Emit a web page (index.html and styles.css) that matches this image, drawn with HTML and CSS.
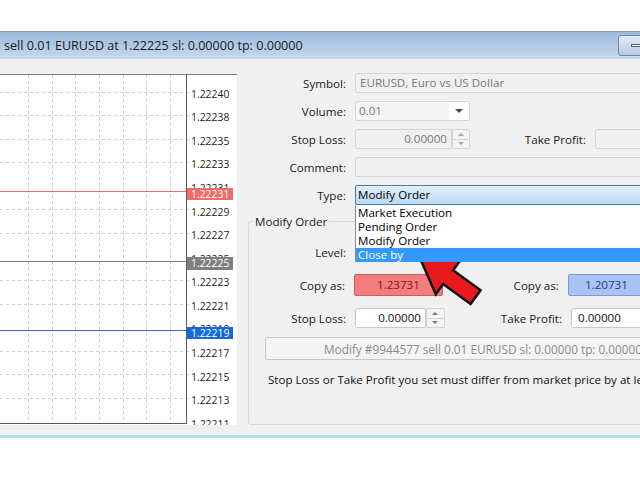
FILE: index.html
```html
<!DOCTYPE html>
<html lang="en">
<head>
    <meta charset="UTF-8">
    <meta name="viewport" content="width=device-width, initial-scale=1.0">
    <title>Modify Order</title>
    <link rel="stylesheet" href="styles.css">
</head>
<body>

    <div class="window">
        <div class="titlebar">
            <span class="title">sell 0.01 EURUSD at 1.22225 sl: 0.00000 tp: 0.00000</span>
            <span class="min-btn"><span class="min-dash"></span></span>
        </div>

        <div class="dialog">
            <div class="chart">
                <svg width="248" height="375" viewBox="0 0 248 375">
                    <rect x="0" y="14" width="237" height="351" fill="#ffffff"/>
                    <g stroke="#cfcfcf" stroke-dasharray="3 3" stroke-width="1">
                        <line x1="28.5" y1="15" x2="28.5" y2="363"/>
                        <line x1="52.5" y1="15" x2="52.5" y2="363"/>
                        <line x1="75.5" y1="15" x2="75.5" y2="363"/>
                        <line x1="99.5" y1="15" x2="99.5" y2="363"/>
                        <line x1="123.5" y1="15" x2="123.5" y2="363"/>
                        <line x1="146.5" y1="15" x2="146.5" y2="363"/>
                        <line x1="170.5" y1="15" x2="170.5" y2="363"/>
                        <line x1="0" y1="32.5" x2="190" y2="32.5"/>
                        <line x1="0" y1="55.5" x2="190" y2="55.5"/>
                        <line x1="0" y1="79.5" x2="190" y2="79.5"/>
                        <line x1="0" y1="102.5" x2="190" y2="102.5"/>
                        <line x1="0" y1="149.5" x2="190" y2="149.5"/>
                        <line x1="0" y1="173.5" x2="190" y2="173.5"/>
                        <line x1="0" y1="220.5" x2="190" y2="220.5"/>
                        <line x1="0" y1="244.5" x2="190" y2="244.5"/>
                        <line x1="0" y1="291.5" x2="190" y2="291.5"/>
                        <line x1="0" y1="314.5" x2="190" y2="314.5"/>
                        <line x1="0" y1="338.5" x2="190" y2="338.5"/>
                    </g>
                    <g class="axis-text">
                        <text x="191" y="37.7">1.22240</text>
                        <text x="191" y="61.3">1.22238</text>
                        <text x="191" y="84.8">1.22235</text>
                        <text x="191" y="108.4">1.22233</text>
                        <text x="191" y="132">1.22231</text>
                        <text x="191" y="155.6">1.22229</text>
                        <text x="191" y="179.1">1.22227</text>
                        <text x="191" y="202.7">1.22225</text>
                        <text x="191" y="226.3">1.22223</text>
                        <text x="191" y="249.8">1.22221</text>
                        <text x="191" y="273.4">1.22219</text>
                        <text x="191" y="297">1.22217</text>
                        <text x="191" y="320.6">1.22215</text>
                        <text x="191" y="344.1">1.22213</text>
                        <text x="191" y="367.7">1.22211</text>
                    </g>
                    <rect x="0" y="365" width="248" height="10" fill="#f0f0f0"/>

                    <!-- price lines -->
                    <line x1="0" y1="131.5" x2="187" y2="131.5" stroke="#e57373"/>
                    <line x1="0" y1="201.5" x2="187" y2="201.5" stroke="#7a7a7a"/>
                    <line x1="0" y1="270.5" x2="187" y2="270.5" stroke="#3f6fb8"/>

                    <rect x="187" y="128" width="46" height="12" fill="#f06a6a"/>
                    <text class="tag-text" x="191" y="137.6">1.22231</text>
                    <rect x="187" y="197" width="46" height="13" fill="#7f7f7f"/>
                    <text class="tag-text" x="191" y="207.3">1.22225</text>
                    <rect x="187" y="267" width="46" height="12" fill="#1569e0"/>
                    <text class="tag-text" x="191" y="276.8">1.22219</text>

                    <!-- frame -->
                    <line x1="0" y1="14.5" x2="237" y2="14.5" stroke="#7d7d7d"/>
                    <line x1="186.5" y1="14" x2="186.5" y2="364" stroke="#5a5a5a"/>
                    <line x1="0" y1="363.5" x2="187" y2="363.5" stroke="#5a5a5a"/>
                </svg>
            </div>

            <div class="order-form">
                <div class="row">
                    <label class="lbl">Symbol:</label>
                    <span class="field wide">EURUSD, Euro vs US Dollar</span>
                </div>
                <div class="row">
                    <label class="lbl">Volume:</label>
                    <span class="combo">
                        <span class="combo-text">0.01</span>
                        <span class="combo-btn"><span class="tri-down"></span></span>
                    </span>
                </div>
                <div class="row">
                    <label class="lbl">Stop Loss:</label>
                    <span class="field num">0.00000</span>
                    <span class="spin"><span class="spin-up"></span><span class="spin-down"></span></span>
                    <label class="lbl lbl-tp">Take Profit:</label>
                    <span class="field short"></span>
                </div>
                <div class="row">
                    <label class="lbl">Comment:</label>
                    <span class="field wide"></span>
                </div>
                <div class="row">
                    <label class="lbl">Type:</label>
                    <div class="type-select">
                        <span class="type-value">Modify Order</span>
                        <ul class="type-list">
                            <li>Market Execution</li>
                            <li>Pending Order</li>
                            <li>Modify Order</li>
                            <li class="selected">Close by</li>
                        </ul>
                    </div>
                </div>

                <fieldset class="group">
                    <legend>Modify Order</legend>
                    <div class="row level-row">
                        <label class="lbl">Level:</label>
                    </div>
                    <div class="row copy-row">
                        <label class="lbl">Copy as:</label>
                        <span class="ctl"><span class="copy copy-sell">1.23731</span></span>
                        <label class="lbl lbl-right">Copy as:</label>
                        <span class="copy copy-buy">1.20731</span>
                    </div>
                    <div class="row">
                        <label class="lbl">Stop Loss:</label>
                        <span class="ctl">
                            <span class="field live sl">0.00000</span>
                            <span class="spin live-spin"><span class="spin-up"></span><span class="spin-down"></span></span>
                        </span>
                        <label class="lbl lbl-right">Take Profit:</label>
                        <span class="field live tp">0.00000</span>
                    </div>
                    <button class="modify-btn" disabled>Modify #9944577 sell 0.01 EURUSD sl: 0.00000 tp: 0.00000</button>
                    <p class="notice">Stop Loss or Take Profit you set must differ from market price by at least 0 points.</p>
                </fieldset>
            </div>
        </div>
    </div>

    <svg class="pointer" width="80" height="64" viewBox="0 0 80 64">
        <polygon points="9,8 50.4,12.2 43.1,22.3 70.6,42.3 60.6,56.1 33.1,36.1 25.8,46.2" fill="#e8181c" stroke="#111111" stroke-width="2.5" stroke-linejoin="miter"/>
    </svg>

</body>
</html>
```

FILE: styles.css
```css
* {
    box-sizing: border-box;
}

body {
    margin: 0;
    width: 640px;
    height: 480px;
    overflow: hidden;
    position: relative;
    background: #ffffff;
    font-family: "Open Sans", "Noto Sans", sans-serif;
    font-size: 11.6px;
    color: #1a1a1a;
}

.window {
    margin-top: 31px;
    width: 640px;
    overflow: hidden;
    border-bottom: 3px solid #aee0ea;
}

.titlebar {
    height: 29px;
    display: flex;
    align-items: center;
    padding-left: 4px;
    border-top: 1px solid #8e9aa8;
    border-bottom: 1px solid #eef3f8;
    background: linear-gradient(#9db9da, #c6d9ee);
}

.title {
    font-size: 12.6px;
    color: #1b1b1b;
    white-space: nowrap;
}

.min-btn {
    margin-left: auto;
    margin-right: -6px;
    width: 28px;
    height: 21px;
    border: 1px solid #6f86a8;
    border-radius: 3px 0 0 3px;
    background: linear-gradient(#e4ecf6, #b6c9e2);
    display: flex;
    align-items: center;
    justify-content: flex-end;
}

.min-dash {
    width: 14px;
    height: 3px;
    background: #ffffff;
    border: 1px solid #50627e;
}

.dialog {
    height: 375px;
    display: flex;
    background: #f0f0f0;
}

.chart {
    width: 248px;
    flex: none;
}

.chart svg {
    display: block;
}

.axis-text {
    font-size: 10.4px;
    fill: #222222;
}

.tag-text {
    font-size: 10.4px;
    fill: #ffffff;
}

.order-form {
    width: 420px;
    flex: none;
    padding-top: 13px;
}

.row {
    display: flex;
    align-items: center;
    height: 20px;
    margin-bottom: 8px;
}

.lbl {
    width: 98px;
    margin-right: 9px;
    text-align: right;
    white-space: nowrap;
}

.lbl-tp {
    width: 116px;
}

.field {
    height: 20px;
    padding: 0 4px;
    line-height: 18px;
    border: 1px solid #d4d4d4;
    border-radius: 2px;
    background: #f0f0f0;
    color: #777777;
    white-space: nowrap;
    overflow: hidden;
}

.wide {
    width: 300px;
}

.short {
    width: 60px;
}

.num {
    width: 97px;
    text-align: right;
}

.combo {
    width: 115px;
    height: 20px;
    display: flex;
    border: 1px solid #d4d4d4;
    border-radius: 2px;
    background: #f4f4f4;
}

.combo-text {
    flex: 1;
    padding-left: 3px;
    line-height: 18px;
    color: #777777;
}

.combo-btn {
    width: 20px;
    background: #ffffff;
    display: flex;
    align-items: center;
    justify-content: center;
}

.tri-down {
    width: 0;
    height: 0;
    border-left: 4px solid transparent;
    border-right: 4px solid transparent;
    border-top: 4px solid #444444;
}

.spin {
    width: 18px;
    height: 20px;
    display: flex;
    flex-direction: column;
}

.spin-up, .spin-down {
    flex: 1;
    border: 1px solid #d4d4d4;
    background: #f3f3f3;
    position: relative;
}

.spin-up {
    border-radius: 2px 2px 0 0;
}

.spin-down {
    border-top: none;
    border-radius: 0 0 2px 2px;
}

.spin-up::after, .spin-down::after {
    content: "";
    position: absolute;
    left: 5px;
    top: 3px;
    border-left: 3px solid transparent;
    border-right: 3px solid transparent;
}

.spin-up::after {
    border-bottom: 3px solid #a8a8a8;
}

.spin-down::after {
    top: 2px;
    border-top: 3px solid #a8a8a8;
}

.type-select {
    position: relative;
    width: 300px;
    height: 20px;
    border: 1px solid #3c7fb1;
    border-radius: 2px;
    background: linear-gradient(#e4f0fb, #bad8f2);
}

.type-value {
    display: block;
    padding-left: 2px;
    line-height: 18px;
    color: #000000;
}

.type-list {
    position: absolute;
    top: 19px;
    left: -1px;
    width: 300px;
    margin: 0;
    padding: 1px 0 0 0;
    list-style: none;
    background: #ffffff;
    border-left: 1px solid #8a8a8a;
    z-index: 2;
}

.type-list li {
    height: 14px;
    line-height: 14px;
    padding-left: 2px;
    color: #000000;
}

.type-list .selected {
    background: #3399ff;
    color: #ffffff;
}

.group {
    margin: 5px 0 0 0;
    padding: 12px 0 36px 0;
    min-inline-size: 0;
    border: 1px solid #d6d6d6;
    border-radius: 3px;
}

.group legend {
    margin-left: 4px;
    padding: 0 2px;
    line-height: 17px;
}

.group .lbl {
    width: 97px;
}

.level-row {
    margin-bottom: 12px;
}

.copy-row {
    height: 22px;
    margin-bottom: 12px;
}

.group .lbl-right {
    width: 117px;
}

.ctl {
    width: 90px;
    display: flex;
}

.copy {
    width: 89px;
    height: 22px;
    line-height: 20px;
    text-align: center;
    border-radius: 2px;
}

.copy-sell {
    background: #f37d7d;
    border: 1px solid #c96060;
    color: #7c1b1b;
}

.copy-buy {
    width: 100px;
    padding-right: 22px;
    background: #a8c3f4;
    border: 1px solid #7e9bd0;
    color: #1b3d8c;
}

.live {
    background: #ffffff;
    border-color: #c8c8c8;
    color: #111111;
    text-align: right;
}

.sl {
    width: 71px;
}

.tp {
    width: 80px;
    text-align: left;
    padding-left: 6px;
}

.live-spin {
    width: 19px;
}

.live-spin .spin-up::after {
    border-bottom-color: #5b7fb5;
}

.live-spin .spin-down::after {
    border-top-color: #5b7fb5;
}

.modify-btn {
    display: block;
    margin: 9px 0 0 16px;
    width: 420px;
    height: 23px;
    padding: 0 0 0 58px;
    text-align: left;
    font-family: inherit;
    font-size: 11.8px;
    color: #8a8a8a;
    background: #f4f4f4;
    border: 1px solid #c6c6c6;
    border-radius: 2px;
    white-space: nowrap;
}

.notice {
    margin: 11px 0 0 19px;
    line-height: 17px;
    white-space: nowrap;
    color: #111111;
}

.pointer {
    position: absolute;
    left: 410px;
    top: 248px;
}
```
